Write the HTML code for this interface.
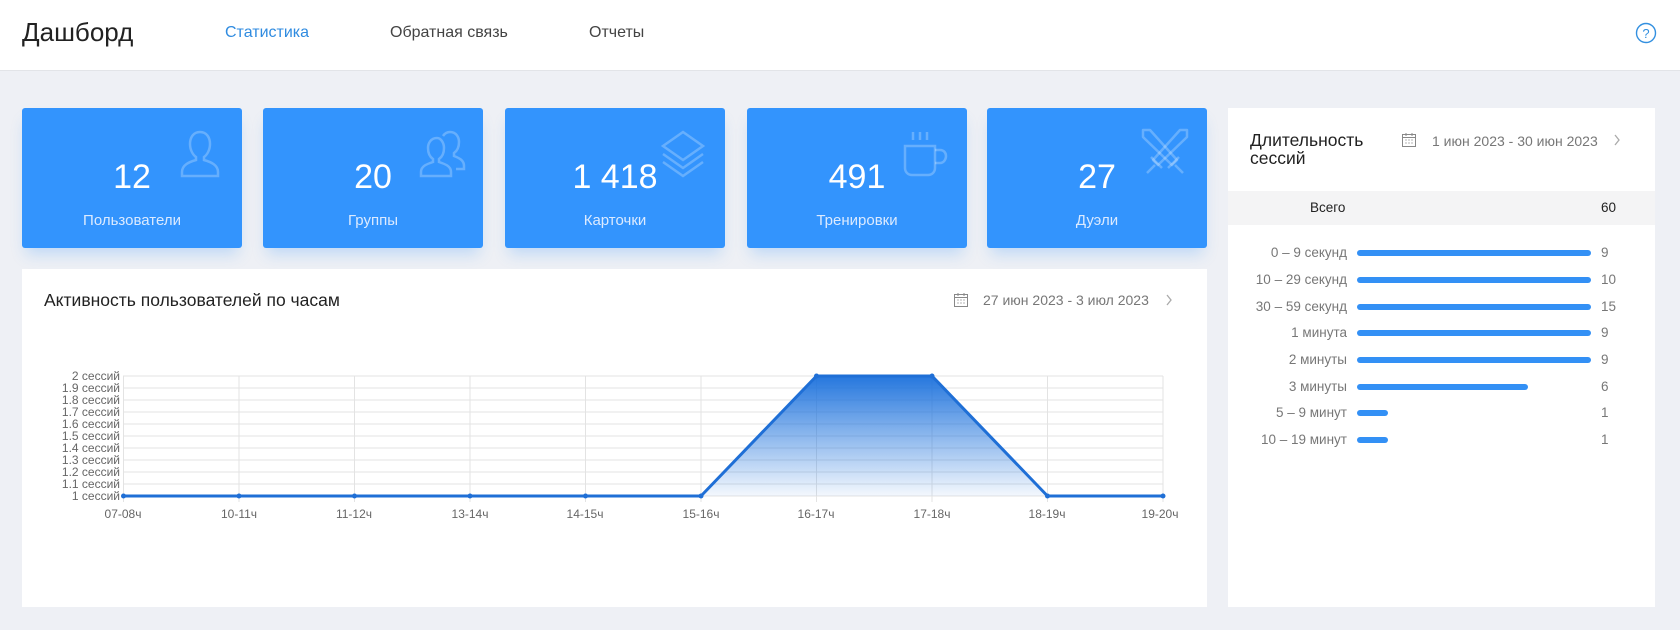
<!DOCTYPE html>
<html><head><meta charset="utf-8"><style>
*{margin:0;padding:0;box-sizing:border-box}
body{width:1680px;height:630px;background:#eef0f5;font-family:"Liberation Sans",sans-serif;position:relative;overflow:hidden;color:#222}
.a{position:absolute}
.hdr{left:0;top:0;width:1680px;height:71px;background:#fff;border-bottom:1px solid #e2e4e8}
.nav{font-size:16px;color:#444;top:24px}
.card{top:108px;width:220px;height:140px;background:#3394fd;border-radius:3px;box-shadow:0 10px 14px -4px rgba(51,148,253,.25);color:#fff;text-align:center}
.card .n{position:absolute;left:0;right:0;top:50px;font-size:34px}
.card .l{position:absolute;left:0;right:0;top:104px;font-size:15px;color:#dbeaff}
.card svg{position:absolute;left:150px;top:18px}
.panel{background:#fff}
.rl{width:150px;text-align:right;font-size:13.5px;color:#777;left:1197px}
.bar{left:1357px;height:6px;background:#3390f5;border-radius:3px}
.rv{left:1601px;font-size:13.5px;color:#777}
</style></head><body>
<div class="a hdr"></div>
<div class="a" style="left:22px;top:17px;font-size:26px;color:#222">Дашборд</div>
<div class="a nav" style="left:225px;color:#2f8be0">Статистика</div>
<div class="a nav" style="left:390px">Обратная связь</div>
<div class="a nav" style="left:589px">Отчеты</div>
<svg class="a" style="left:1635px;top:22px" width="22" height="22"><circle cx="11" cy="11" r="9.5" fill="none" stroke="#3390e0" stroke-width="1.4"/><text x="11" y="16" text-anchor="middle" font-size="13" fill="#3390e0" font-family="Liberation Sans">?</text></svg>

<div class="a card" style="left:22px"><svg width="56" height="56" fill="none" stroke="rgba(255,255,255,.25)" stroke-width="2.5"><path d="M28 6c-7 0-10 6-10 12s3 11 6 13v3c-7 2-14 5-14 12v4h36v-4c0-7-7-10-14-12v-3c3-2 6-7 6-13S35 6 28 6z"/></svg><div class="n">12</div><div class="l">Пользователи</div></div>
<div class="a card" style="left:263px"><svg width="56" height="56" fill="none" stroke="rgba(255,255,255,.25)" stroke-width="2.5"><path d="M24 12c-6 0-9 5-9 10s2 9 5 11v3c-6 2-12 4-12 10v4h30v-4c0-6-6-8-12-10v-3c3-2 5-6 5-11s-3-10-7-10z"/><path d="M30 10c2-3 4-4 7-4 6 0 9 5 9 10s-2 9-5 11v3c5 2 10 4 10 10v3h-8"/></svg><div class="n">20</div><div class="l">Группы</div></div>
<div class="a card" style="left:505px"><svg width="56" height="56" fill="none" stroke="rgba(255,255,255,.25)" stroke-width="2.5"><path d="M28 6l20 14-20 14L8 20z"/><path d="M8 28l20 14 20-14"/><path d="M8 36l20 14 20-14"/></svg><div class="n">1 418</div><div class="l">Карточки</div></div>
<div class="a card" style="left:747px"><svg width="56" height="56" fill="none" stroke="rgba(255,255,255,.25)" stroke-width="2.5"><path d="M8 20h30v22c0 4-3 7-7 7H15c-4 0-7-3-7-7z"/><path d="M38 24h5c4 0 6 3 6 6s-2 7-6 7h-5"/><path d="M16 6v8M23 6v8M30 6v8"/></svg><div class="n">491</div><div class="l">Тренировки</div></div>
<div class="a card" style="left:987px"><svg width="56" height="56" fill="none" stroke="rgba(255,255,255,.25)" stroke-width="2.5" stroke-linejoin="round"><path d="M6 4h7l27 30-5 5L6 11z"/><path d="M50 4h-7L16 34l5 5L50 11z"/><path d="M31 42l11-11M14 31l11 11M38 39l8 8M18 39l-8 8"/></svg><div class="n">27</div><div class="l">Дуэли</div></div>

<div class="a panel" style="left:22px;top:269px;width:1185px;height:338px"></div>
<div class="a" style="left:44px;top:290px;font-size:17.5px;color:#222">Активность пользователей по часам</div>
<svg class="a" style="left:953px;top:292px" width="16" height="16" fill="none" stroke="#888" stroke-width="1"><rect x="1.5" y="2.5" width="13" height="12"/><path d="M5 1v3M11 1v3M1.5 5.5h13"/><path d="M4.5 8h1M7.5 8h1M10.5 8h1M4.5 11h1M7.5 11h1M10.5 11h1" stroke-width="1.2"/></svg>
<div class="a" style="left:983px;top:292px;font-size:14px;color:#777">27 июн 2023 - 3 июл 2023</div>
<svg class="a" style="left:1165px;top:294px" width="8" height="12" fill="none" stroke="#aaa" stroke-width="1.3"><path d="M2 1l4 5-4 5"/></svg>

<svg class="a" style="left:0;top:0" width="1220" height="620" font-family="Liberation Sans" font-size="12" fill="#666">
<defs><linearGradient id="g" x1="0" y1="0" x2="0" y2="1"><stop offset="0" stop-color="#1a70dc" stop-opacity=".95"/><stop offset="1" stop-color="#1a70dc" stop-opacity=".05"/></linearGradient></defs>
<g stroke="#e3e3e3" stroke-width="1">
<path d="M123 376H1163M123 388H1163M123 400H1163M123 412H1163M123 424H1163M123 436H1163M123 448H1163M123 460H1163M123 472H1163M123 484H1163M123 496H1163"/>
<path d="M123.5 376V502M239 376V502M354.5 376V502M470 376V502M585.5 376V502M701 376V502M816.5 376V502M932 376V502M1047.5 376V502M1163 376V502"/>
</g>
<g text-anchor="end">
<text x="120" y="380">2 сессий</text><text x="120" y="392">1.9 сессий</text><text x="120" y="404">1.8 сессий</text><text x="120" y="416">1.7 сессий</text><text x="120" y="428">1.6 сессий</text><text x="120" y="440">1.5 сессий</text><text x="120" y="452">1.4 сессий</text><text x="120" y="464">1.3 сессий</text><text x="120" y="476">1.2 сессий</text><text x="120" y="488">1.1 сессий</text><text x="120" y="500">1 сессий</text>
</g>
<g text-anchor="middle">
<text x="123" y="518">07-08ч</text><text x="239" y="518">10-11ч</text><text x="354" y="518">11-12ч</text><text x="470" y="518">13-14ч</text><text x="585" y="518">14-15ч</text><text x="701" y="518">15-16ч</text><text x="816" y="518">16-17ч</text><text x="932" y="518">17-18ч</text><text x="1047" y="518">18-19ч</text><text x="1160" y="518">19-20ч</text>
</g>
<path d="M701 496L816.5 376H932L1047.5 496Z" fill="url(#g)"/>
<path d="M123.5 496H701L816.5 376H932L1047.5 496H1163" fill="none" stroke="#1f6fd6" stroke-width="3" stroke-linejoin="round"/>
<g fill="#1f6fd6"><circle cx="123.5" cy="496" r="2.5"/><circle cx="239" cy="496" r="2.5"/><circle cx="354.5" cy="496" r="2.5"/><circle cx="470" cy="496" r="2.5"/><circle cx="585.5" cy="496" r="2.5"/><circle cx="701" cy="496" r="2.5"/><circle cx="816.5" cy="376" r="2.5"/><circle cx="932" cy="376" r="2.5"/><circle cx="1047.5" cy="496" r="2.5"/><circle cx="1163" cy="496" r="2.5"/></g>
</svg>

<div class="a panel" style="left:1228px;top:108px;width:427px;height:499px"></div>
<div class="a" style="left:1250px;top:131px;font-size:17.5px;line-height:18px;color:#222">Длительность<br>сессий</div>
<svg class="a" style="left:1401px;top:132px" width="16" height="16" fill="none" stroke="#888" stroke-width="1"><rect x="1.5" y="2.5" width="13" height="12"/><path d="M5 1v3M11 1v3M1.5 5.5h13"/><path d="M4.5 8h1M7.5 8h1M10.5 8h1M4.5 11h1M7.5 11h1M10.5 11h1" stroke-width="1.2"/></svg>
<div class="a" style="left:1432px;top:133px;font-size:14px;color:#777">1 июн 2023 - 30 июн 2023</div>
<svg class="a" style="left:1613px;top:134px" width="8" height="12" fill="none" stroke="#aaa" stroke-width="1.3"><path d="M2 1l4 5-4 5"/></svg>
<div class="a" style="left:1228px;top:191px;width:427px;height:34px;background:#f4f4f5"></div>
<div class="a" style="left:1310px;top:200px;font-size:13.5px;color:#222">Всего</div>
<div class="a" style="left:1601px;top:200px;font-size:13.5px;color:#222">60</div>

<div class="a rl" style="top:245px">0 – 9 секунд</div><div class="a bar" style="top:250px;width:234px"></div><div class="a rv" style="top:245px">9</div>
<div class="a rl" style="top:272px">10 – 29 секунд</div><div class="a bar" style="top:277px;width:234px"></div><div class="a rv" style="top:272px">10</div>
<div class="a rl" style="top:299px">30 – 59 секунд</div><div class="a bar" style="top:304px;width:234px"></div><div class="a rv" style="top:299px">15</div>
<div class="a rl" style="top:325px">1 минута</div><div class="a bar" style="top:330px;width:234px"></div><div class="a rv" style="top:325px">9</div>
<div class="a rl" style="top:352px">2 минуты</div><div class="a bar" style="top:357px;width:234px"></div><div class="a rv" style="top:352px">9</div>
<div class="a rl" style="top:379px">3 минуты</div><div class="a bar" style="top:384px;width:171px"></div><div class="a rv" style="top:379px">6</div>
<div class="a rl" style="top:405px">5 – 9 минут</div><div class="a bar" style="top:410px;width:31px"></div><div class="a rv" style="top:405px">1</div>
<div class="a rl" style="top:432px">10 – 19 минут</div><div class="a bar" style="top:437px;width:31px"></div><div class="a rv" style="top:432px">1</div>
</body></html>
